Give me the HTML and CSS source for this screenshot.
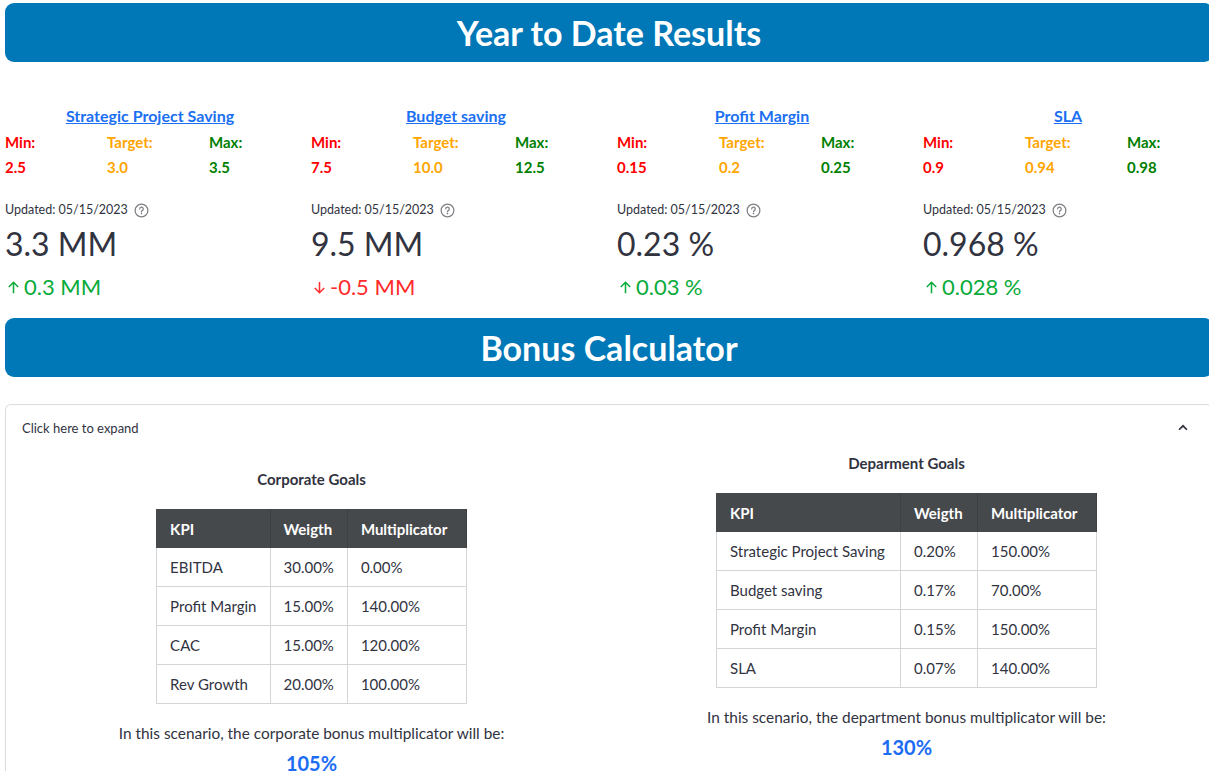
FILE: index.html
```html
<!DOCTYPE html>
<html>
<head>
<meta charset="utf-8">
<link rel="stylesheet" href="styles.css">
</head>
<body>
<div class="page">
  <div class="banner"><h1>Year to Date Results</h1></div>

  <div class="kpis">
    <div class="kpi">
      <a class="kpi-link" href="#">Strategic Project Saving</a>
      <div class="range">
        <div><div class="lbl min">Min:</div><div class="val min">2.5</div></div>
        <div><div class="lbl tgt">Target:</div><div class="val tgt">3.0</div></div>
        <div><div class="lbl max">Max:</div><div class="val max">3.5</div></div>
      </div>
      <div class="updated">Updated: 05/15/2023 <span class="help"><svg viewBox="0 0 16 16" width="15" height="15"><circle cx="8" cy="8" r="6.8" fill="none" stroke="#7d7f84" stroke-width="1.3"/><path d="M6.1 6.4a1.9 1.9 0 1 1 2.7 1.7c-.6.3-.8.6-.8 1.3" fill="none" stroke="#7d7f84" stroke-width="1.3" stroke-linecap="round"/><circle cx="8" cy="11.3" r=".85" fill="#7d7f84"/></svg></span></div>
      <div class="metric">3.3 MM</div>
      <div class="delta up"><svg class="arr" viewBox="0 0 16 16" width="15" height="15"><path d="M8 14V2.5M3 7.5l5-5 5 5" fill="none" stroke="currentColor" stroke-width="1.6"/></svg>0.3 MM</div>
    </div>

    <div class="kpi">
      <a class="kpi-link" href="#">Budget saving</a>
      <div class="range">
        <div><div class="lbl min">Min:</div><div class="val min">7.5</div></div>
        <div><div class="lbl tgt">Target:</div><div class="val tgt">10.0</div></div>
        <div><div class="lbl max">Max:</div><div class="val max">12.5</div></div>
      </div>
      <div class="updated">Updated: 05/15/2023 <span class="help"><svg viewBox="0 0 16 16" width="15" height="15"><circle cx="8" cy="8" r="6.8" fill="none" stroke="#7d7f84" stroke-width="1.3"/><path d="M6.1 6.4a1.9 1.9 0 1 1 2.7 1.7c-.6.3-.8.6-.8 1.3" fill="none" stroke="#7d7f84" stroke-width="1.3" stroke-linecap="round"/><circle cx="8" cy="11.3" r=".85" fill="#7d7f84"/></svg></span></div>
      <div class="metric">9.5 MM</div>
      <div class="delta down"><svg class="arr" viewBox="0 0 16 16" width="15" height="15"><path d="M8 2v11.5M3 8.5l5 5 5-5" fill="none" stroke="currentColor" stroke-width="1.6"/></svg>-0.5 MM</div>
    </div>

    <div class="kpi">
      <a class="kpi-link" href="#">Profit Margin</a>
      <div class="range">
        <div><div class="lbl min">Min:</div><div class="val min">0.15</div></div>
        <div><div class="lbl tgt">Target:</div><div class="val tgt">0.2</div></div>
        <div><div class="lbl max">Max:</div><div class="val max">0.25</div></div>
      </div>
      <div class="updated">Updated: 05/15/2023 <span class="help"><svg viewBox="0 0 16 16" width="15" height="15"><circle cx="8" cy="8" r="6.8" fill="none" stroke="#7d7f84" stroke-width="1.3"/><path d="M6.1 6.4a1.9 1.9 0 1 1 2.7 1.7c-.6.3-.8.6-.8 1.3" fill="none" stroke="#7d7f84" stroke-width="1.3" stroke-linecap="round"/><circle cx="8" cy="11.3" r=".85" fill="#7d7f84"/></svg></span></div>
      <div class="metric">0.23 %</div>
      <div class="delta up"><svg class="arr" viewBox="0 0 16 16" width="15" height="15"><path d="M8 14V2.5M3 7.5l5-5 5 5" fill="none" stroke="currentColor" stroke-width="1.6"/></svg>0.03 %</div>
    </div>

    <div class="kpi">
      <a class="kpi-link" href="#">SLA</a>
      <div class="range">
        <div><div class="lbl min">Min:</div><div class="val min">0.9</div></div>
        <div><div class="lbl tgt">Target:</div><div class="val tgt">0.94</div></div>
        <div><div class="lbl max">Max:</div><div class="val max">0.98</div></div>
      </div>
      <div class="updated">Updated: 05/15/2023 <span class="help"><svg viewBox="0 0 16 16" width="15" height="15"><circle cx="8" cy="8" r="6.8" fill="none" stroke="#7d7f84" stroke-width="1.3"/><path d="M6.1 6.4a1.9 1.9 0 1 1 2.7 1.7c-.6.3-.8.6-.8 1.3" fill="none" stroke="#7d7f84" stroke-width="1.3" stroke-linecap="round"/><circle cx="8" cy="11.3" r=".85" fill="#7d7f84"/></svg></span></div>
      <div class="metric">0.968 %</div>
      <div class="delta up"><svg class="arr" viewBox="0 0 16 16" width="15" height="15"><path d="M8 14V2.5M3 7.5l5-5 5 5" fill="none" stroke="currentColor" stroke-width="1.6"/></svg>0.028 %</div>
    </div>
  </div>

  <div class="banner banner2"><h1>Bonus Calculator</h1></div>

  <div class="expander">
    <div class="exp-head">
      <span>Click here to expand</span>
      <svg class="chev" viewBox="0 0 16 16" width="14" height="14"><path d="M3.5 10l4.5-4.5 4.5 4.5" fill="none" stroke="#31333f" stroke-width="2"/></svg>
    </div>
    <div class="exp-body">
      <div class="goal goal-left">
        <div class="goal-title">Corporate Goals</div>
        <table class="tbl tbl-corp">
          <thead><tr><th>KPI</th><th>Weigth</th><th>Multiplicator</th></tr></thead>
          <tbody>
            <tr><td>EBITDA</td><td>30.00%</td><td>0.00%</td></tr>
            <tr><td>Profit Margin</td><td>15.00%</td><td>140.00%</td></tr>
            <tr><td>CAC</td><td>15.00%</td><td>120.00%</td></tr>
            <tr><td>Rev Growth</td><td>20.00%</td><td>100.00%</td></tr>
          </tbody>
        </table>
        <div class="scenario">In this scenario, the corporate bonus multiplicator will be:</div>
        <div class="result">105%</div>
      </div>
      <div class="goal">
        <div class="goal-title">Deparment Goals</div>
        <table class="tbl tbl-dept">
          <thead><tr><th>KPI</th><th>Weigth</th><th>Multiplicator</th></tr></thead>
          <tbody>
            <tr><td>Strategic Project Saving</td><td>0.20%</td><td>150.00%</td></tr>
            <tr><td>Budget saving</td><td>0.17%</td><td>70.00%</td></tr>
            <tr><td>Profit Margin</td><td>0.15%</td><td>150.00%</td></tr>
            <tr><td>SLA</td><td>0.07%</td><td>140.00%</td></tr>
          </tbody>
        </table>
        <div class="scenario">In this scenario, the department bonus multiplicator will be:</div>
        <div class="result">130%</div>
      </div>
    </div>
  </div>
</div>
</body>
</html>
```

FILE: styles.css
```css
html, body {
  margin: 0;
  padding: 0;
  background: #ffffff;
  overflow: hidden;
}
body {
  font-family: Lato, "Noto Sans", sans-serif;
  color: #31333f;
}
.page {
  width: 1208px;
  padding: 3px 0 0 5px;
}
.banner {
  background: #0077b6;
  border-radius: 9px;
  height: 59px;
  display: flex;
  align-items: center;
  justify-content: center;
}
.banner h1 {
  margin: 0;
  color: #ffffff;
  font-size: 34px;
  font-weight: 700;
  line-height: 1;
}
.kpis {
  display: grid;
  grid-template-columns: repeat(4, 1fr);
  column-gap: 16px;
  margin-top: 42px;
}
.kpi {
  display: flex;
  flex-direction: column;
}
.kpi-link {
  align-self: center;
  color: #1a6ff2;
  font-weight: 700;
  font-size: 16px;
  line-height: 24px;
  text-decoration: underline;
}
.range {
  display: grid;
  grid-template-columns: repeat(3, 1fr);
  column-gap: 16px;
  margin-top: 2px;
}
.lbl, .val {
  font-weight: 700;
  font-size: 15px;
  line-height: 24px;
}
.val { margin-top: 1px; }
.min { color: #ff0000; }
.tgt { color: #ffa500; }
.max { color: #008000; }
.updated {
  margin-top: 20px;
  font-size: 12.5px;
  line-height: 22px;
  display: flex;
  align-items: center;
  gap: 4px;
}
.help {
  display: inline-flex;
  margin-left: 2px;
}
.metric {
  margin-top: 1px;
  font-size: 32px;
  line-height: 44px;
}
.delta {
  margin-top: 6px;
  font-size: 22px;
  line-height: 30px;
  display: flex;
  align-items: center;
  gap: 3px;
}
.delta .arr { margin-left: 1px; }
.up { color: #09ab3b; }
.down { color: #ff2b2b; }
.banner2 { margin-top: 16px; }
.expander {
  margin-top: 27px;
  border: 1px solid #dcdcdf;
  border-bottom: none;
  border-radius: 6px 6px 0 0;
  padding: 0 16px 0 16px;
}
.exp-head {
  display: flex;
  align-items: center;
  justify-content: space-between;
  height: 46px;
  font-size: 13px;
}
.chev { margin-right: 6px; }
.exp-body {
  display: grid;
  grid-template-columns: 1fr 1fr;
  column-gap: 16px;
}
.goal {
  display: flex;
  flex-direction: column;
  align-items: center;
  padding-top: 1px;
}
.goal-left { padding-top: 17px; }
.goal-title {
  font-weight: 700;
  font-size: 15px;
  line-height: 22px;
}
.tbl {
  margin-top: 19px;
  border-collapse: collapse;
  font-size: 15px;
  white-space: nowrap;
}
.tbl th {
  background: #46494c;
  color: #ffffff;
  font-weight: 700;
  text-align: left;
  height: 37px;
  padding: 0 13px;
  border: 1px solid #46494c;
  border-right-color: #3d4043;
}
.tbl td {
  height: 38px;
  padding: 0 13px;
  border: 1px solid #d5d5d8;
}
.tbl-corp th:nth-child(1) { width: 86px; }
.tbl-corp th:nth-child(2) { width: 49px; }
.tbl-corp th:nth-child(3) { width: 92px; }
.tbl-dept th:nth-child(1) { width: 157px; }
.tbl-dept th:nth-child(2) { width: 50px; }
.tbl-dept th:nth-child(3) { width: 92px; }
.scenario {
  margin-top: 17px;
  font-size: 15.4px;
  line-height: 24px;
}
.result {
  margin-top: 9px;
  color: #1c6cf3;
  font-weight: 700;
  font-size: 20px;
  line-height: 18px;
}
```
